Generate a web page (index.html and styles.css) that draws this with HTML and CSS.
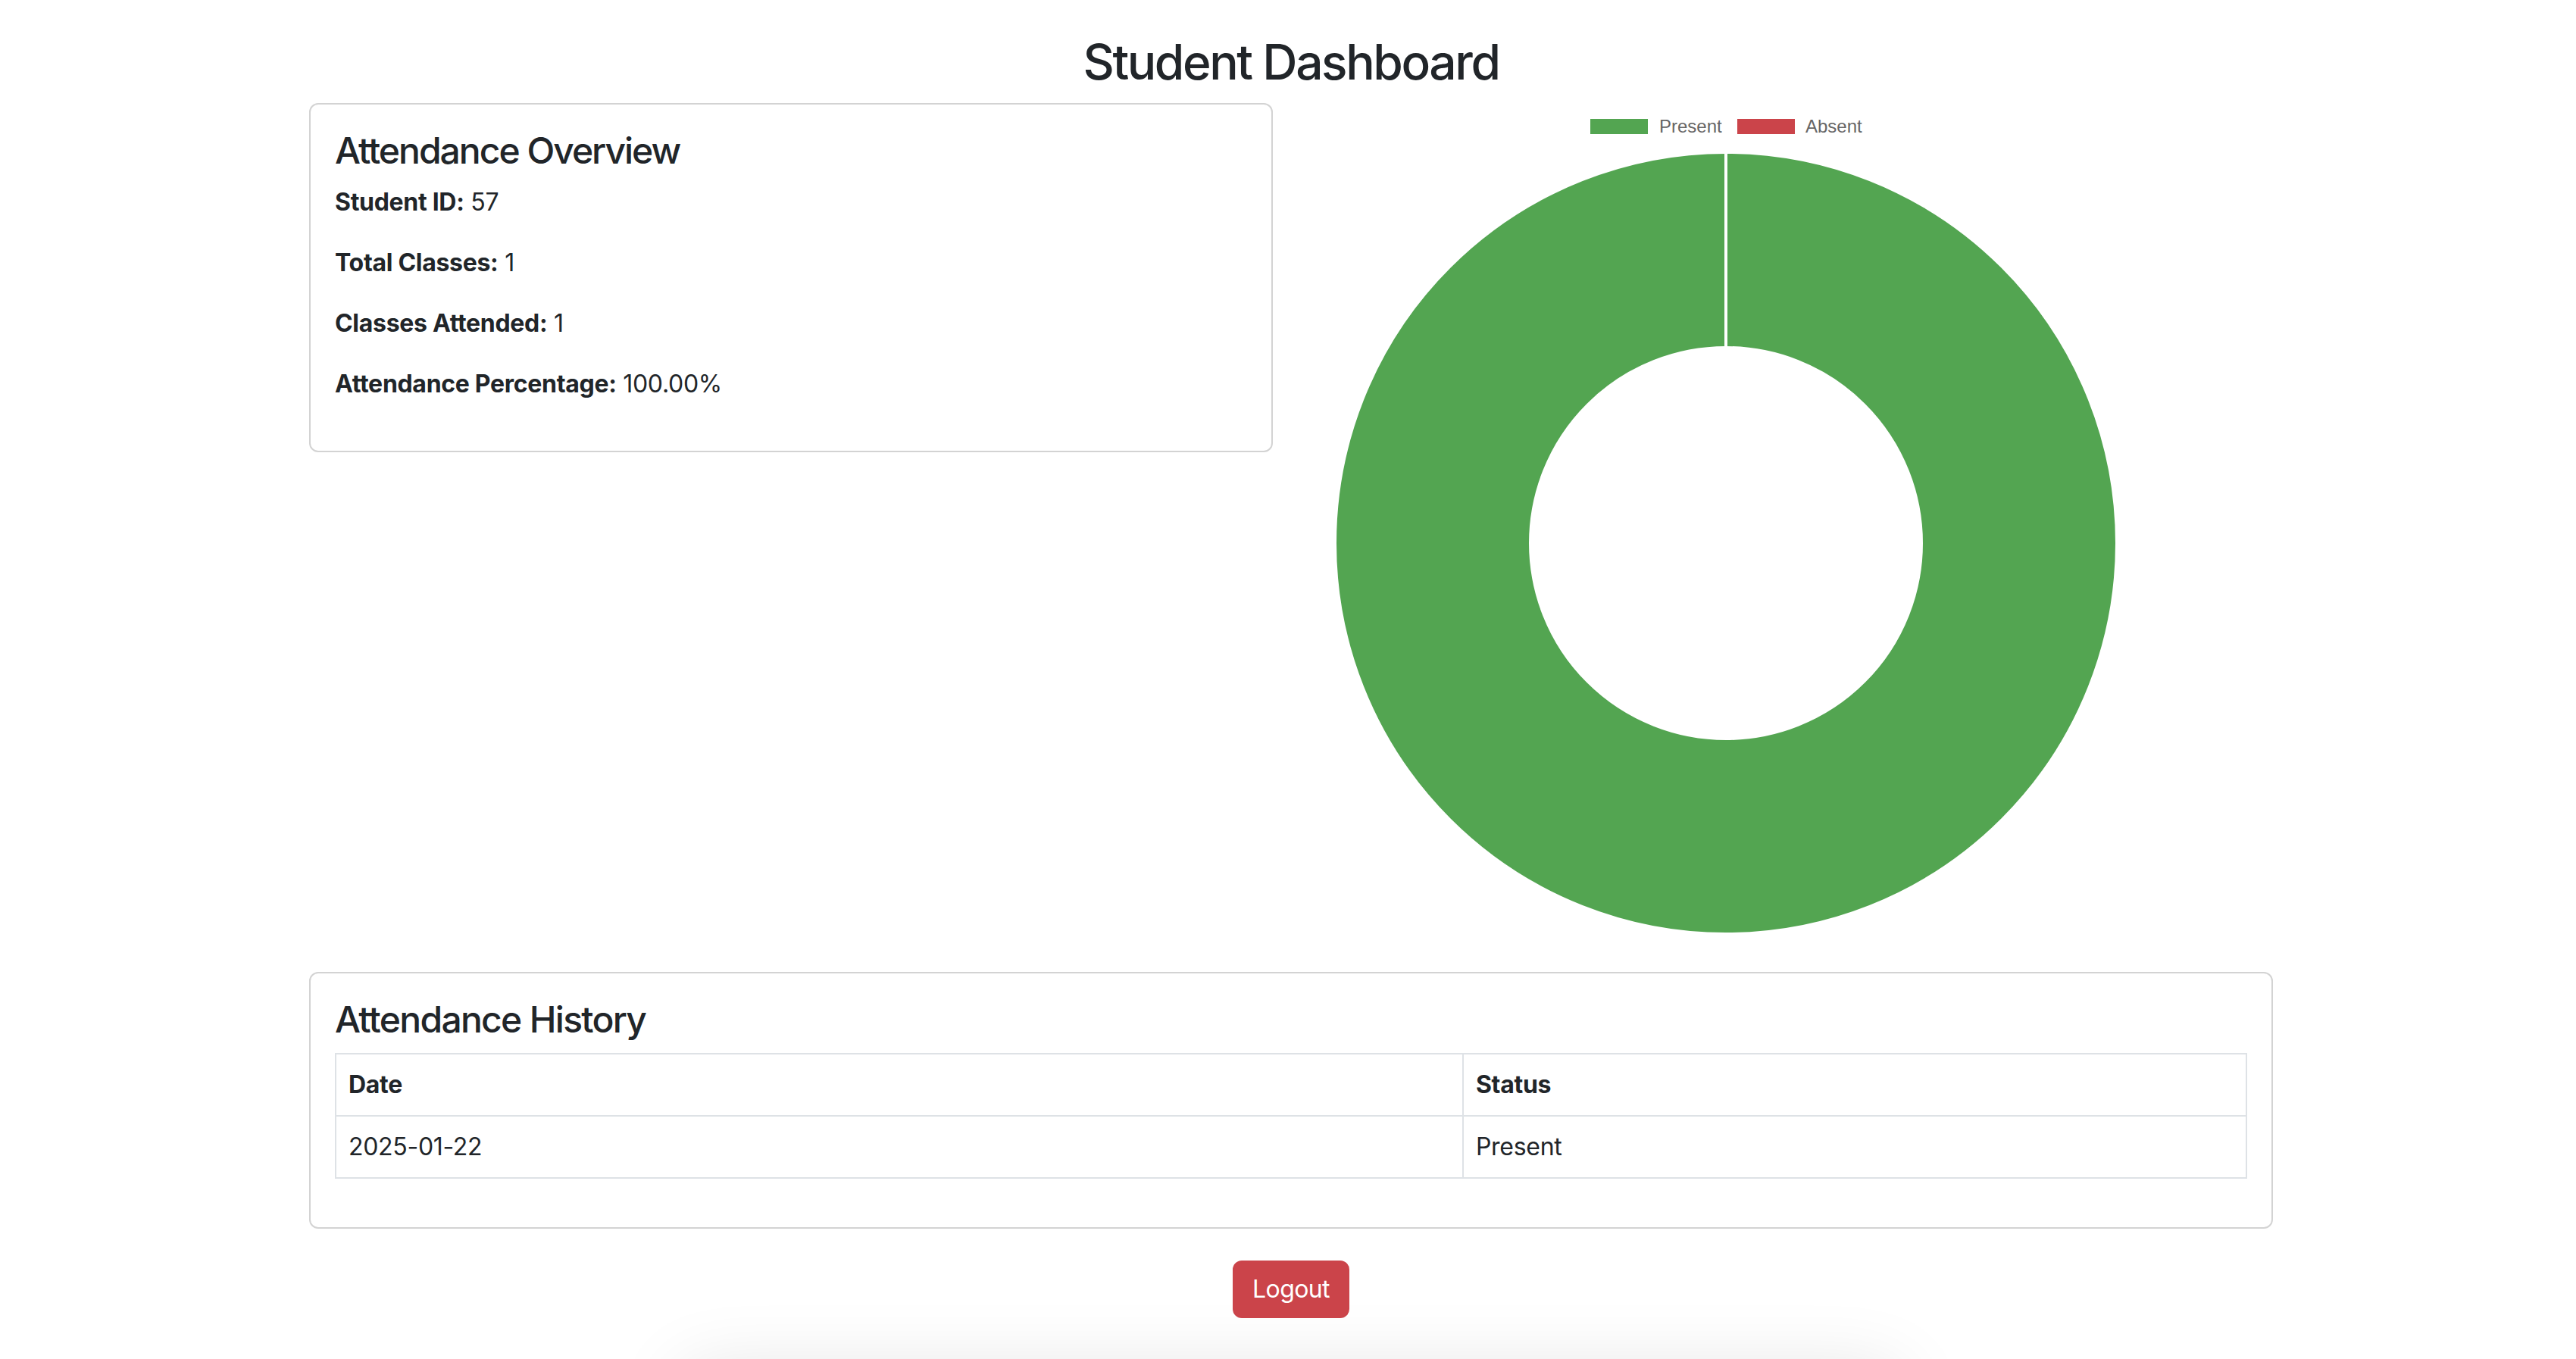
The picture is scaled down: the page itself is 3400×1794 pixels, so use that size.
FILE: index.html
```html
<!DOCTYPE html>
<html lang="en">
<head>
<meta charset="utf-8">
<title>Student Dashboard</title>
<link rel="stylesheet" href="styles.css">
</head>
<body>
<div class="container">
  <h2 class="page-title">Student Dashboard</h2>
  <div class="row">
    <div class="col">
      <div class="card">
        <div class="card-body">
          <h4 class="card-title">Attendance Overview</h4>
          <p><strong>Student ID:</strong> 57</p>
          <p><strong>Total Classes:</strong> 1</p>
          <p><strong>Classes Attended:</strong> 1</p>
          <p><strong>Attendance Percentage:</strong> 100.00%</p>
        </div>
      </div>
    </div>
    <div class="col">
      <svg class="chart" width="1108" height="1108" viewBox="0 0 1108 1108" xmlns="http://www.w3.org/2000/svg">
        <rect x="371" y="21" width="76" height="20" fill="#53a551"/>
        <text class="legend-text" x="462" y="39">Present</text>
        <rect x="565" y="21" width="76" height="20" fill="#cb444a"/>
        <text class="legend-text" x="655" y="39">Absent</text>
        <circle cx="550" cy="581" r="387" fill="none" stroke="#53a551" stroke-width="254"/>
        <rect x="548" y="66" width="4" height="256" fill="#ffffff"/>
      </svg>
    </div>
  </div>

  <div class="card history">
    <div class="card-body">
      <h4 class="card-title title-history">Attendance History</h4>
      <table class="table">
        <thead>
          <tr><th class="col-date">Date</th><th>Status</th></tr>
        </thead>
        <tbody>
          <tr><td>2025-01-22</td><td>Present</td></tr>
        </tbody>
      </table>
    </div>
  </div>

  <div class="actions">
    <button class="btn-danger" type="button">Logout</button>
  </div>
  <div class="footer-panel"></div>
</div>
</body>
</html>
```

FILE: styles.css
```css
html, body {
  margin: 0;
  padding: 0;
  background: #ffffff;
  overflow: hidden;
}

body {
  padding-left: 8px;
  font-family: Inter, "Noto Sans", "Liberation Sans", sans-serif;
  font-size: 32px;
  line-height: 1.5;
  color: #212529;
  letter-spacing: -0.3px;
}

.container {
  width: 2640px;
  margin: 0 auto;
  padding: 44px 24px 0;
  box-sizing: border-box;
}

.page-title {
  font-size: 64px;
  font-weight: 500;
  line-height: 1.2;
  text-align: center;
  margin: 0 0 15px;
  letter-spacing: -2.4px;
}

.row {
  display: flex;
  margin: 0 -24px;
}

.col {
  flex: 0 0 50%;
  padding: 0 24px;
  box-sizing: border-box;
}

.card {
  border: 2px solid #d3d3d3;
  border-radius: 12px;
  background: #ffffff;
}

.card-body {
  padding: 32px;
}

.card-title {
  font-size: 48px;
  font-weight: 500;
  line-height: 1.2;
  margin: 0 0 16px;
  letter-spacing: -2px;
}

.title-history {
  letter-spacing: -1.7px;
}

.card-body p {
  margin: 0 0 32px;
}

.card-body strong {
  font-weight: 700;
}

.chart {
  display: block;
}

.legend-text {
  font-family: "Liberation Sans", Arial, sans-serif;
  font-size: 24px;
  letter-spacing: 0;
  fill: #666666;
}

.history {
  margin-top: 39px;
}

.table {
  width: 100%;
  border-collapse: collapse;
  margin-bottom: 32px;
}

.table th,
.table td {
  border: 2px solid #dee2e6;
  padding: 16px 16px;
  text-align: left;
  line-height: 48px;
}

.table th {
  font-weight: 700;
}

.col-date {
  width: 59%;
}

.actions {
  margin-top: 42px;
  text-align: center;
}

.btn-danger {
  font-family: Inter, "Noto Sans", "Liberation Sans", sans-serif;
  font-size: 32px;
  line-height: 48px;
  letter-spacing: -0.6px;
  color: #ffffff;
  background: #cb444a;
  border: 2px solid #cb444a;
  border-radius: 12px;
  padding: 12px 24px;
  cursor: pointer;
}

.footer-panel {
  width: 1600px;
  height: 200px;
  margin: 72px auto 0;
  background: #ffffff;
  box-shadow: 0 0 100px rgba(0, 0, 0, 0.12);
}
```
